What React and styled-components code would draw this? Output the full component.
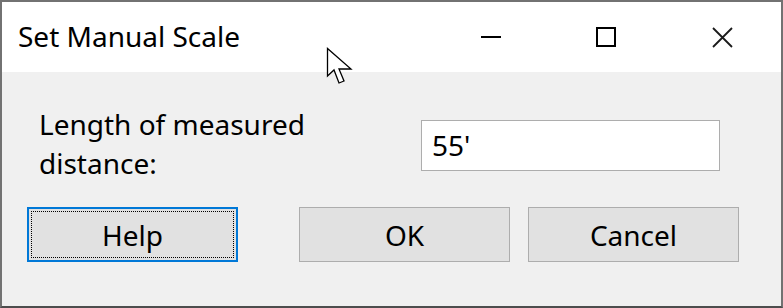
import React from "react";
import styled, { createGlobalStyle } from "styled-components";

const Global = createGlobalStyle`
  html, body { margin: 0; padding: 0; background: #3c3c3c; }
  body { width: 783px; height: 308px; overflow: hidden; }
  * { box-sizing: border-box; }
`;

const FONT = `"Noto Sans", "Open Sans", "Liberation Sans", sans-serif`;

const Window = styled.div`
  position: relative;
  width: 783px;
  height: 308px;
  border: 2px solid #727272;
  border-bottom-color: #4d4d4d;
  background: #f0f0f0;
  display: flex;
  flex-direction: column;
  font-family: ${FONT};
  color: #000;
`;

const TitleBar = styled.div`
  height: 70px;
  background: #fff;
  display: flex;
  align-items: center;
  padding-left: 16px;
`;

const Title = styled.div`
  flex: 1;
  font-size: 28px;
  line-height: 1;
  padding-bottom: 2px;
`;

const Controls = styled.div`
  display: flex;
  height: 100%;
`;

const CtrlButton = styled.div`
  width: 115px;
  height: 100%;
  display: flex;
  align-items: center;
  justify-content: center;
  padding-right: ${(p) => p.$shift || 0}px;
`;

const Body = styled.div`
  flex: 1;
  display: flex;
  flex-direction: column;
  padding: 33px 42px 0 25px;
`;

const FieldRow = styled.div`
  display: flex;
  justify-content: space-between;
  align-items: flex-start;
  padding-left: 12px;
  padding-right: 19px;
`;

const Label = styled.div`
  font-size: 28px;
  line-height: 39px;
  width: 300px;
`;

const Input = styled.div`
  margin-top: 15px;
  width: 299px;
  height: 51px;
  background: #fff;
  border: 1px solid #adadad;
  font-size: 28px;
  line-height: 49px;
  padding-left: 10px;
`;

const ButtonRow = styled.div`
  margin-top: 24px;
  display: flex;
  align-items: center;
`;

const Button = styled.div`
  position: relative;
  width: 211px;
  height: 55px;
  background: #e1e1e1;
  border: ${(p) => (p.$focused ? "2px solid #0078d7" : "1px solid #adadad")};
  display: flex;
  align-items: center;
  justify-content: center;
  font-size: 28px;
  line-height: 1;
  padding-top: 1px;
  margin-left: ${(p) => p.$gap || 0}px;
  &::after {
    content: "";
    display: ${(p) => (p.$focused ? "block" : "none")};
    position: absolute;
    inset: 2px;
    border: 1px dotted #000;
  }
`;

const Cursor = styled.svg`
  position: absolute;
  left: 322px;
  top: 43px;
`;

export default function App() {
  return (
    <>
      <Global />
      <Window>
        <TitleBar>
          <Title>Set Manual Scale</Title>
          <Controls>
            <CtrlButton $shift={6}>
              <svg width="20" height="20" viewBox="0 0 20 20">
                <rect x="0" y="9" width="20" height="2" fill="#000" />
              </svg>
            </CtrlButton>
            <CtrlButton $shift={6}>
              <svg width="20" height="20" viewBox="0 0 20 20">
                <rect x="1" y="1" width="18" height="18" fill="none" stroke="#000" strokeWidth="2" />
              </svg>
            </CtrlButton>
            <CtrlButton $shift={3}>
              <svg width="21" height="21" viewBox="0 0 21 21">
                <path d="M1 1 L20 20 M20 1 L1 20" stroke="#1a1a1a" strokeWidth="1.8" fill="none" />
              </svg>
            </CtrlButton>
          </Controls>
        </TitleBar>
        <Body>
          <FieldRow>
            <Label>
              Length of measured
              <br />
              distance:
            </Label>
            <Input>55'</Input>
          </FieldRow>
          <ButtonRow>
            <Button $focused>Help</Button>
            <Button $gap={61}>OK</Button>
            <Button $gap={18}>Cancel</Button>
          </ButtonRow>
        </Body>
        <Cursor width="34" height="44" viewBox="0 0 34 44">
          <path
            d="M3.5 3.5 L3.5 31 L10 25 L15 38 L20 36 L15 24 L27 24 Z"
            fill="#fff"
            stroke="#000"
            strokeWidth="1.3"
            strokeLinejoin="miter"
          />
        </Cursor>
      </Window>
    </>
  );
}
